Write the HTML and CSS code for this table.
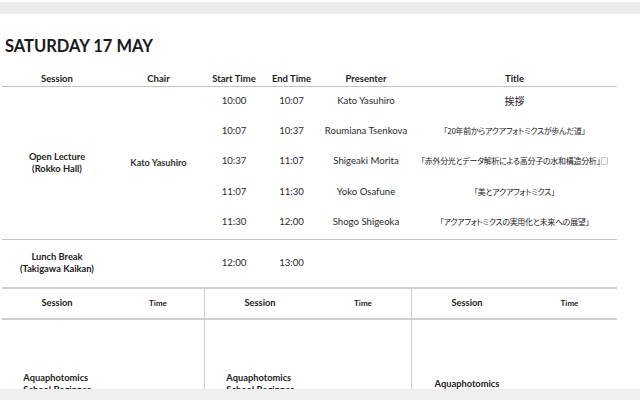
FILE: index.html
```html
<!DOCTYPE html>
<html lang="en">
<head>
<meta charset="utf-8">
<title>Saturday 17 May</title>
<link rel="stylesheet" href="styles.css">
</head>
<body>
<div class="topbar"></div>
<main class="page">
  <h1 class="day">SATURDAY 17 MAY</h1>

  <section class="sched">
    <div class="row head">
      <div class="cell">Session</div>
      <div class="cell">Chair</div>
      <div class="cell">Start Time</div>
      <div class="cell">End Time</div>
      <div class="cell">Presenter</div>
      <div class="cell">Title</div>
    </div>

    <div class="row lecture">
      <div class="cell sess span5">Open Lecture<br>(Rokko Hall)</div>
      <div class="cell chair span5">Kato Yasuhiro</div>
      <div class="cell time">10:00</div>
      <div class="cell time">10:07</div>
      <div class="cell">Kato Yasuhiro</div>
      <div class="cell jp big">挨拶</div>
      <div class="cell time">10:07</div>
      <div class="cell time">10:37</div>
      <div class="cell">Roumiana Tsenkova</div>
      <div class="cell jp">「20年前からアクアフォトミクスが歩んだ道」</div>
      <div class="cell time">10:37</div>
      <div class="cell time">11:07</div>
      <div class="cell">Shigeaki Morita</div>
      <div class="cell jp">「赤外分光とデータ解析による高分子の水和構造分析」□</div>
      <div class="cell time">11:07</div>
      <div class="cell time">11:30</div>
      <div class="cell">Yoko Osafune</div>
      <div class="cell jp">「美とアクアフォトミクス」</div>
      <div class="cell time">11:30</div>
      <div class="cell time">12:00</div>
      <div class="cell">Shogo Shigeoka</div>
      <div class="cell jp">「アクアフォトミクスの実用化と未来への展望」</div>
    </div>

    <div class="row lunch">
      <div class="cell sess">Lunch Break<br>(Takigawa Kaikan)</div>
      <div class="cell"></div>
      <div class="cell time">12:00</div>
      <div class="cell time">13:00</div>
      <div class="cell"></div>
      <div class="cell"></div>
    </div>
  </section>

  <section class="parallel">
    <div class="track">
      <div class="thead">
        <div class="cell">Session</div>
        <div class="cell tlabel">Time</div>
      </div>
      <div class="tbody">
        <div class="cell sess">Aquaphotomics<br>School Beginner</div>
        <div class="cell"></div>
      </div>
    </div>
    <div class="track">
      <div class="thead">
        <div class="cell">Session</div>
        <div class="cell tlabel">Time</div>
      </div>
      <div class="tbody">
        <div class="cell sess">Aquaphotomics<br>School Beginner</div>
        <div class="cell"></div>
      </div>
    </div>
    <div class="track">
      <div class="thead">
        <div class="cell">Session</div>
        <div class="cell tlabel">Time</div>
      </div>
      <div class="tbody">
        <div class="cell sess low">Aquaphotomics</div>
        <div class="cell"></div>
      </div>
    </div>
  </section>
</main>
<div class="bottombar"></div>
</body>
</html>
```

FILE: styles.css
```css
html, body {
  margin: 0;
  padding: 0;
  overflow: hidden;
  background: #ffffff;
}

body {
  font-family: "Lato", "Noto Sans CJK JP", sans-serif;
  font-size: 9.6px;
  color: #2b2b2b;
}

.topbar {
  margin-top: 2px;
  height: 12px;
  background: #ebebeb;
}

.page {
  width: 615px;
  padding: 0 0 0 2px;
}

.day {
  margin: 22px 0 0 3px;
  font-size: 16.5px;
  line-height: 20px;
  font-weight: 700;
  color: #1a1a1a;
}

.sched {
  margin-top: 16px;
}

.row {
  display: grid;
  grid-template-columns: 110px 93px 58px 57px 92px 205px;
  text-align: center;
}

.cell {
  display: flex;
  align-items: center;
  justify-content: center;
  line-height: 12px;
}

.head {
  height: 14px;
  border-bottom: 1px solid #c4c4c4;
  font-size: 9.5px;
  font-weight: 700;
  color: #222222;
}

.head .cell {
  align-items: flex-start;
  padding-top: 1px;
}

.lecture {
  grid-auto-rows: 30.4px;
  border-bottom: 1px solid #c4c4c4;
}

.span5 {
  grid-row: span 5;
}

.sess {
  font-size: 9.3px;
  font-weight: 700;
  color: #222222;
}

.chair {
  font-size: 9.2px;
  font-weight: 700;
  color: #333333;
}

.lecture .cell:not(.span5) {
  padding-bottom: 3px;
}

.jp {
  font-family: "Noto Sans CJK JP", sans-serif;
  font-feature-settings: "palt";
  font-size: 8px;
  letter-spacing: -0.3px;
  color: #222222;
}

.jp.big {
  font-size: 10px;
  letter-spacing: 0;
}

.lunch {
  height: 47px;
  border-bottom: 2px solid #cfcfcf;
}

.parallel {
  display: grid;
  grid-template-columns: 203px 207px 205px;
}

.track {
  border-right: 1px solid #cfcfcf;
}

.track:last-child {
  border-right: none;
}

.thead {
  display: grid;
  grid-template-columns: 110px 1fr;
  height: 29px;
  border-bottom: 2px solid #cfcfcf;
  font-size: 9.3px;
  font-weight: 700;
  color: #222222;
}

.thead .cell {
  padding-bottom: 1px;
}

.tlabel {
  font-size: 8px;
}

.tbody {
  display: grid;
  grid-template-columns: 110px 1fr;
  height: 100px;
}

.tbody .cell {
  align-items: flex-start;
  padding-top: 52px;
}

.tbody .sess.low {
  padding-top: 58px;
}

.bottombar {
  position: fixed;
  left: 0;
  right: 0;
  bottom: 0;
  height: 11px;
  background: #efefef;
}
```
